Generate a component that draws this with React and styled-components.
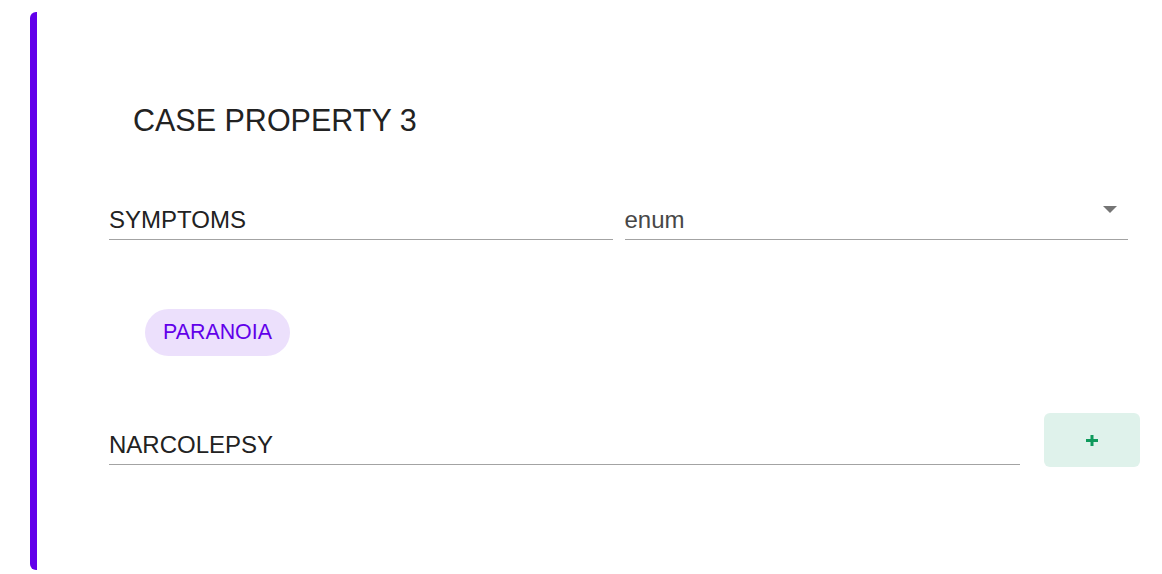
import React from 'react';
import styled, { createGlobalStyle } from 'styled-components';

const GlobalStyle = createGlobalStyle`
  html, body {
    margin: 0;
    padding: 0;
    background: #fff;
    font-family: 'Liberation Sans', Arial, sans-serif;
  }
`;

const Page = styled.div`
  padding: 12px 0 4px 30px;
`;

const Card = styled.section`
  display: flex;
  flex-direction: column;
  box-sizing: border-box;
  height: 558px;
  padding: 90px 22px 0 72px;
  background: #fff;
  border-left: 7px solid #6200ea;
  border-radius: 6px 0 0 6px;
`;

const Title = styled.h2`
  margin: 0;
  padding-left: 24px;
  font: normal 400 30.5px/36px 'Liberation Sans', Arial, sans-serif;
  color: #222;
`;

const Row = styled.div`
  display: flex;
  align-items: ${p => p.$align || 'stretch'};
  gap: ${p => p.$gap || 12}px;
  margin-top: ${p => p.$top || 0}px;
  margin-right: ${p => p.$right || 0}px;
`;

const Field = styled.div`
  flex: 1 1 0;
  display: flex;
  align-items: flex-start;
  justify-content: space-between;
  padding-bottom: 4px;
  margin-bottom: ${p => p.$bottom || 0}px;
  border-bottom: 1px solid #a3a3a3;
  font: normal 400 24px/30px 'Liberation Sans', Arial, sans-serif;
  color: ${p => (p.$muted ? '#474747' : '#222')};
`;

const Caret = styled.svg`
  margin: 1px 11px 0 0;
  flex: none;
`;

const ChipRow = styled.div`
  display: flex;
  margin: 69px 0 0 36px;
`;

const Chip = styled.span`
  display: inline-flex;
  align-items: center;
  height: 47px;
  padding: 0 18px;
  border-radius: 24px;
  background: #ece0fc;
  color: #6200ea;
  font: normal 400 21.4px/1 'Liberation Sans', Arial, sans-serif;
`;

const AddButton = styled.button`
  display: flex;
  align-items: center;
  justify-content: center;
  flex: none;
  width: 96px;
  height: 54px;
  padding: 0;
  border: none;
  border-radius: 6px;
  background: #dff2eb;
  cursor: pointer;
`;

export default function App() {
  return (
    <>
      <GlobalStyle />
      <Page>
        <Card>
          <Title>CASE PROPERTY 3</Title>
          <Row $top={67} $right={12}>
            <Field>SYMPTOMS</Field>
            <Field $muted>
              enum
              <Caret width="14" height="7" viewBox="0 0 14 7">
                <path d="M0 0h14L7 7z" fill="#757575" />
              </Caret>
            </Field>
          </Row>
          <ChipRow>
            <Chip>PARANOIA</Chip>
          </ChipRow>
          <Row $top={57} $gap={24} $align="flex-end">
            <Field $bottom={2}>NARCOLEPSY</Field>
            <AddButton aria-label="add">
              <svg width="12" height="11" viewBox="0 0 12 11">
                <path d="M4.5 0h3v4h4.5v3H7.5v4h-3V7H0V4h4.5z" fill="#0e9a5c" />
              </svg>
            </AddButton>
          </Row>
        </Card>
      </Page>
    </>
  );
}
